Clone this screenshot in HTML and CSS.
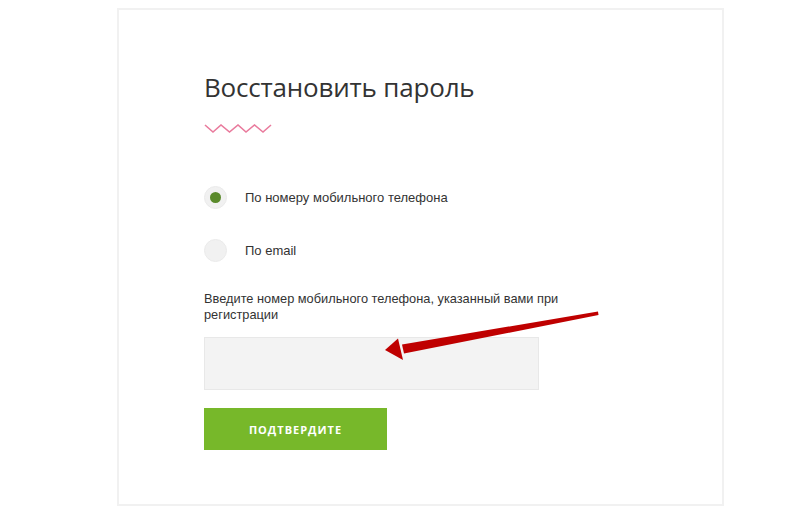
FILE: index.html
```html
<!DOCTYPE html>
<html lang="ru">
<head>
<meta charset="utf-8">
<link rel="stylesheet" href="styles.css">
</head>
<body>
<div class="card">
  <h1 class="title">Восстановить пароль</h1>
  <svg class="zigzag" width="70" height="10" viewBox="0 0 70 10">
    <polyline points="1,1 9,8 17,1 25.5,8 34,1 42,8 50.5,1 59,8 67,1" fill="none" stroke="#e97b9d" stroke-width="1.6"/>
  </svg>
  <div class="options">
    <label class="option"><span class="radio checked"><span class="dot"></span></span><span>По номеру мобильного телефона</span></label>
    <label class="option"><span class="radio"></span><span>По email</span></label>
  </div>
  <p class="hint">Введите номер мобильного телефона, указанный вами при регистрации</p>
  <div class="field"></div>
  <button class="submit">ПОДТВЕРДИТЕ</button>
</div>
<svg class="arrow" width="800" height="516" viewBox="0 0 800 516">
  <polygon points="598,311.5 598.5,315 404,353.5 402,344.5" fill="#bf0000"/>
  <polygon points="385,350 398,338.5 403,360" fill="#bf0000"/>
</svg>
</body>
</html>
```
FILE: styles.css
```css
* { box-sizing: border-box; }
html, body { margin: 0; padding: 0; background: #fff; }
body {
  width: 800px;
  height: 516px;
  overflow: hidden;
  font-family: "Liberation Sans", Arial, sans-serif;
  color: #333;
  position: relative;
}
.card {
  margin: 8px 0 0 117px;
  width: 607px;
  height: 498px;
  border: 2px solid #f1f1f1;
  padding: 58px 0 0 85px;
  display: flex;
  flex-direction: column;
  align-items: flex-start;
}
.title {
  margin: 0;
  font-family: "Open Sans", sans-serif;
  font-weight: 500;
  font-size: 26px;
  line-height: 38px;
  color: #333;
  letter-spacing: -0.2px;
}
.zigzag { display: block; margin-top: 18px; margin-left: 0; }
.options {
  margin-top: 52px;
  display: flex;
  flex-direction: column;
  gap: 30px;
}
.option {
  display: flex;
  align-items: center;
  gap: 18px;
  font-size: 13px;
  color: #333;
}
.radio {
  width: 23px;
  height: 23px;
  border-radius: 50%;
  background: #f1f1f1;
  border: 1px solid #ebebeb;
  display: flex;
  align-items: center;
  justify-content: center;
}
.dot {
  width: 11px;
  height: 11px;
  border-radius: 50%;
  background: #5a8a2b;
}
.hint {
  margin: 29px 0 0;
  width: 370px;
  font-size: 12.8px;
  line-height: 16px;
  color: #333;
}
.field {
  margin-top: 14px;
  width: 335px;
  height: 53px;
  background: #f3f3f3;
  border: 1px solid #e8e8e8;
}
.submit {
  margin-top: 18px;
  width: 183px;
  height: 42px;
  border: none;
  background: #77b82a;
  color: #fff;
  font-family: "Open Sans", sans-serif;
  font-weight: 700;
  font-size: 11px;
  letter-spacing: 1px;
  padding: 0;
}
.arrow {
  position: absolute;
  left: 0;
  top: 0;
  pointer-events: none;
}
```
